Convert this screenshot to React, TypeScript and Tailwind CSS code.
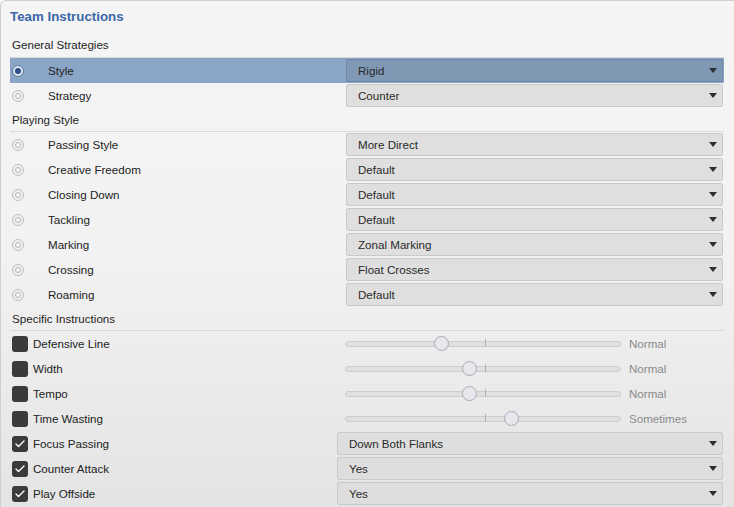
import { Check } from 'lucide-react';

interface SelectRow {
  label: string;
  value: string;
  selected?: boolean;
}

interface SliderRow {
  label: string;
  pos: number;
  text: string;
}

const general: SelectRow[] = [
  { label: 'Style', value: 'Rigid', selected: true },
  { label: 'Strategy', value: 'Counter' },
];

const playing: SelectRow[] = [
  { label: 'Passing Style', value: 'More Direct' },
  { label: 'Creative Freedom', value: 'Default' },
  { label: 'Closing Down', value: 'Default' },
  { label: 'Tackling', value: 'Default' },
  { label: 'Marking', value: 'Zonal Marking' },
  { label: 'Crossing', value: 'Float Crosses' },
  { label: 'Roaming', value: 'Default' },
];

const sliders: SliderRow[] = [
  { label: 'Defensive Line', pos: 96, text: 'Normal' },
  { label: 'Width', pos: 124, text: 'Normal' },
  { label: 'Tempo', pos: 124, text: 'Normal' },
  { label: 'Time Wasting', pos: 166, text: 'Sometimes' },
];

const toggles = [
  { label: 'Focus Passing', value: 'Down Both Flanks' },
  { label: 'Counter Attack', value: 'Yes' },
  { label: 'Play Offside', value: 'Yes' },
];

function Arrow() {
  return (
    <span className="w-0 h-0 border-l-[4px] border-r-[4px] border-t-[5px] border-l-transparent border-r-transparent border-t-[#2e2e2e]" />
  );
}

function Dropdown({ value, active, wide }: { value: string; active?: boolean; wide?: boolean }) {
  return (
    <div
      className={`h-[23px] ${wide ? 'w-[386px]' : 'w-[377px]'} flex items-center justify-between pl-[11px] pr-[5px] rounded-[2px] border ${
        active ? 'bg-[#7f99b5] border-[#6f88a6]' : 'bg-[#dddddd]/90 border-[#c9c9c9]'
      }`}
    >
      <span className="text-[#2a2a2a]">{value}</span>
      <Arrow />
    </div>
  );
}

function Radio({ on }: { on?: boolean }) {
  return (
    <span
      className={`w-[12px] h-[12px] rounded-full border flex items-center justify-center ${
        on ? 'border-[#5b77a0] bg-[#dfe6f0]' : 'border-[#bdbdbd] bg-[#f0f0f0]'
      }`}
    >
      <span
        className={`w-[6px] h-[6px] rounded-full ${
          on ? 'bg-[#2d4f86]' : 'border border-[#b5b5b5] bg-[#f7f7f7]'
        }`}
      />
    </span>
  );
}

function Header({ title, tall }: { title: string; tall?: boolean }) {
  return (
    <div
      className={`${tall ? 'h-[25px]' : 'h-[24px]'} flex items-center pl-[2px] border-b border-[#d9d9d9] text-[#1e1e1e]`}
    >
      {title}
    </div>
  );
}

function Box({ on }: { on?: boolean }) {
  return (
    <span className="w-[16px] h-[16px] rounded-[3px] bg-[#3b3b3b] flex items-center justify-center shrink-0">
      {on && <Check size={12} strokeWidth={2.75} className="text-white" />}
    </span>
  );
}

export default function App() {
  return (
    <div
      className="w-[734px] h-[507px] overflow-hidden rounded-tl-[6px] border-l border-t border-[#cfcfcf] bg-gradient-to-b from-[#f5f5f5] via-[#f2f2f2] to-[#e4e4e4] text-[11.6px] text-[#222]"
      style={{ fontFamily: '"Liberation Sans", Arial, sans-serif' }}
    >
      <div className="h-[32px] flex items-center pl-[9px] text-[13.3px] font-bold text-[#3b68a8]">Team Instructions</div>
      <div className="ml-[9px] mr-[10px]">
        <Header title="General Strategies" tall />
        {general.map((r) => (
          <div
            key={r.label}
            className={`h-[25px] flex items-center ${r.selected ? 'bg-[#8aa5c5]' : ''}`}
          >
            <div className="w-[38px] pl-[2px] flex items-center">
              <Radio on={r.selected} />
            </div>
            <span className="w-[298px]">{r.label}</span>
            <Dropdown value={r.value} active={r.selected} />
          </div>
        ))}
        <Header title="Playing Style" />
        {playing.map((r) => (
          <div key={r.label} className="h-[25px] flex items-center">
            <div className="w-[38px] pl-[2px] flex items-center">
              <Radio />
            </div>
            <span className="w-[298px]">{r.label}</span>
            <Dropdown value={r.value} />
          </div>
        ))}
        <Header title="Specific Instructions" />
        {sliders.map((s) => (
          <div key={s.label} className="h-[25px] flex items-center">
            <div className="w-[23px] pl-[2px] flex items-center">
              <Box />
            </div>
            <span className="w-[312px]">{s.label}</span>
            <div className="relative w-[276px] h-[6px] rounded-full bg-[#e0e0e0] border border-[#cdcdcd]">
              <span className="absolute left-[139px] top-[-3px] w-px h-[8px] bg-[#b0b0b0]" />
              <span
                className="absolute top-[-6px] w-[15px] h-[15px] rounded-full bg-[#e6e8ee] border border-[#a9abb2]"
                style={{ left: s.pos - 8 }}
              />
            </div>
            <span className="ml-[8px] text-[#8a8a8a]">{s.text}</span>
          </div>
        ))}
        {toggles.map((t) => (
          <div key={t.label} className="h-[25px] flex items-center">
            <div className="w-[23px] pl-[2px] flex items-center">
              <Box on />
            </div>
            <span className="w-[304px]">{t.label}</span>
            <Dropdown value={t.value} wide />
          </div>
        ))}
      </div>
    </div>
  );
}
